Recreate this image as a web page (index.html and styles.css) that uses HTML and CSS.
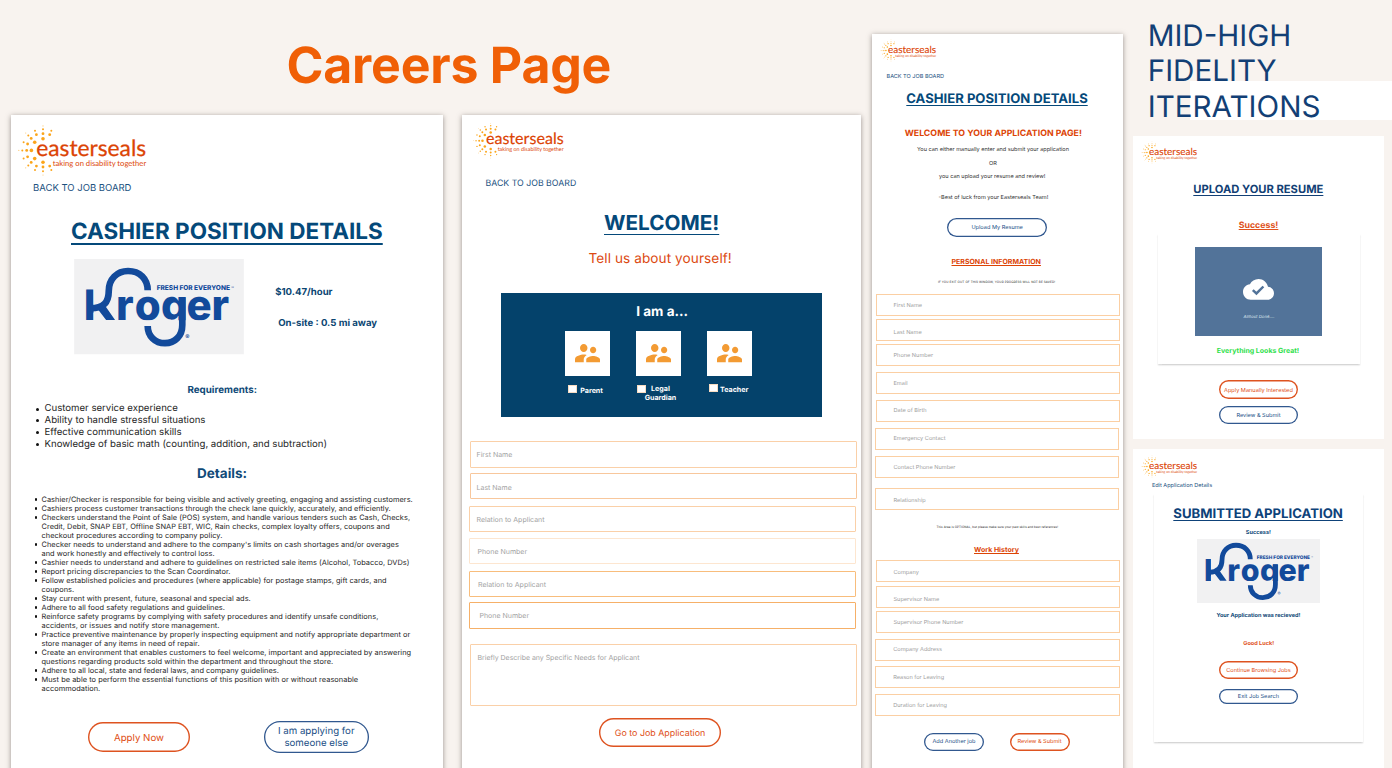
FILE: index.html
```html
<!DOCTYPE html>
<html lang="en">
<head>
<meta charset="utf-8">
<title>Careers Page</title>
<link rel="stylesheet" href="styles.css">
</head>
<body>
<svg class="defs" width="0" height="0" aria-hidden="true">
  <symbol id="easterseals" viewBox="0 0 130 53">
    <g fill="#fba51a">
      <circle cx="25" cy="1.9" r=".6" opacity=".6"/><circle cx="25" cy="5.3" r="1"/><circle cx="25" cy="9.7" r="1.4"/><circle cx="25" cy="14.7" r="1.8"/>
      <circle cx="25" cy="38.2" r="1.8"/><circle cx="25" cy="43" r="1.4"/><circle cx="25" cy="47.3" r="1"/><circle cx="25" cy="51" r=".6" opacity=".6"/>
      <circle cx=".8" cy="26.4" r=".6" opacity=".6"/><circle cx="4.3" cy="26.4" r="1"/><circle cx="8.7" cy="26.4" r="1.4"/><circle cx="13.4" cy="26.4" r="1.8"/>
      <circle cx="16.7" cy="18.3" r="1.8"/><circle cx="13.2" cy="14.4" r="1.4"/><circle cx="10.3" cy="11.4" r="1"/><circle cx="7.7" cy="9" r=".6" opacity=".6"/>
      <circle cx="16.7" cy="34.6" r="1.8"/><circle cx="13.2" cy="38.4" r="1.4"/><circle cx="10.3" cy="41.4" r="1"/><circle cx="7.7" cy="43.8" r=".6" opacity=".6"/>
      <circle cx="9.6" cy="20" r="1.4"/><circle cx="5.6" cy="18.3" r="1"/><circle cx="9.6" cy="32.8" r="1.4"/><circle cx="5.6" cy="34.5" r="1"/>
      <circle cx="18.4" cy="10.7" r="1.4"/><circle cx="17" cy="6.7" r="1"/><circle cx="31.7" cy="10.7" r="1.4"/><circle cx="33.3" cy="6.7" r="1"/>
      <circle cx="18.4" cy="42.1" r="1.4"/><circle cx="17" cy="46.1" r="1"/><circle cx="31.7" cy="42.1" r="1.4"/><circle cx="33.3" cy="46.1" r="1"/>
    </g>
    <g fill="#dc4405" font-family="Lato, sans-serif" text-rendering="geometricPrecision">
      <text x="18.2" y="31.6" font-size="22.5" textLength="110" lengthAdjust="spacingAndGlyphs" stroke="#dc4405" stroke-width=".25">easterseals</text>
      <text x="34.8" y="41.6" font-size="7.7" textLength="93.4" lengthAdjust="spacingAndGlyphs">taking on disability together</text>
    </g>
  </symbol>
  <symbol id="kroger" viewBox="0 0 510 287">
    <clipPath id="baseline"><path d="M0 0H510V184H0Z"/></clipPath>
    <path fill="#f1f1f2" d="M0 0H510V287H0Z"/>
    <g fill="#124a9b" font-family="Inter, sans-serif" font-weight="800" text-rendering="geometricPrecision">
      <g clip-path="url(#baseline)" font-size="126">
        <text x="29 126 182 261 338 413" y="183">kroger</text>
      </g>
      <text x="248" y="94" font-size="20" textLength="220" lengthAdjust="spacingAndGlyphs">FRESH FOR EVERYONE</text>
      <text x="471" y="94" font-size="15" font-weight="500">™</text>
      <text x="334" y="241" font-size="19" font-weight="600">®</text>
    </g>
    <path fill="#f1f1f2" d="M58.5 90H110V184H58.5Z"/>
    <path fill="#124a9b" d="M66 146L90 136L123 183H96L73 153Z"/>
    <g fill="none" stroke="#124a9b" stroke-width="20">
      <path d="M50 148C88 148 104 130 104 96C104 60 129 36 162 36C197 36 221 60 221 94"/>
      <path d="M325 115V198C325 231 303 253 273 253C243 253 221 231 221 201"/>
    </g>
  </symbol>
  <symbol id="people" viewBox="2 5 20 14" preserveAspectRatio="none">
    <path fill="#f39b33" d="M16.5 12c1.38 0 2.49-1.12 2.49-2.5S17.88 7 16.5 7 14 8.12 14 9.5s1.12 2.5 2.5 2.5zM9 11c1.66 0 2.99-1.34 2.99-3S10.66 5 9 5 6 6.34 6 8s1.34 3 3 3zm7.5 3c-1.83 0-5.5.92-5.5 2.75V19h11v-2.25c0-1.83-3.67-2.75-5.5-2.75zM9 13c-2.33 0-7 1.17-7 3.5V19h7v-2.25c0-.85.33-2.34 2.37-3.47C10.5 13.1 9.66 13 9 13z"/>
  </symbol>
</svg>

<div class="board">
  <div class="left">
    <h1 class="page-title">Careers Page</h1>
    <div class="pair">
      <section class="sheet details">
        <svg class="logo-lg"><use href="#easterseals"/></svg>
        <a class="t back">BACK TO JOB BOARD</a>
        <h2 class="heading">CASHIER POSITION DETAILS</h2>
        <div class="hero">
          <svg class="brand"><use href="#kroger"/></svg>
          <div class="facts">
            <p class="t pay">$10.47/hour</p>
            <p class="t distance">On-site : 0.5 mi away</p>
          </div>
        </div>
        <h3 class="t req-title">Requirements:</h3>
        <ul class="req">
          <li>Customer service experience</li>
          <li>Ability to handle stressful situations</li>
          <li>Effective communication skills</li>
          <li>Knowledge of basic math (counting, addition, and subtraction)</li>
        </ul>
        <h3 class="det-title">Details:</h3>
        <ul class="duties">
          <li>Cashier/Checker is responsible for being visible and actively greeting, engaging and assisting customers.</li>
          <li>Cashiers process customer transactions through the check lane quickly, accurately, and efficiently.</li>
          <li>Checkers understand the Point of Sale (POS) system, and handle various tenders such as Cash, Checks,<br>Credit, Debit, SNAP EBT, Offline SNAP EBT, WIC, Rain checks, complex loyalty offers, coupons and<br>checkout procedures according to company policy.</li>
          <li>Checker needs to understand and adhere to the company's limits on cash shortages and/or overages<br>and work honestly and effectively to control loss.</li>
          <li>Cashier needs to understand and adhere to guidelines on restricted sale items (Alcohol, Tobacco, DVDs)</li>
          <li>Report pricing discrepancies to the Scan Coordinator.</li>
          <li>Follow established policies and procedures (where applicable) for postage stamps, gift cards, and<br>coupons.</li>
          <li>Stay current with present, future, seasonal and special ads.</li>
          <li>Adhere to all food safety regulations and guidelines.</li>
          <li>Reinforce safety programs by complying with safety procedures and identify unsafe conditions,<br>accidents, or issues and notify store management.</li>
          <li>Practice preventive maintenance by properly inspecting equipment and notify appropriate department or<br>store manager of any items in need of repair.</li>
          <li>Create an environment that enables customers to feel welcome, important and appreciated by answering<br>questions regarding products sold within the department and throughout the store.</li>
          <li>Adhere to all local, state and federal laws, and company guidelines.</li>
          <li>Must be able to perform the essential functions of this position with or without reasonable<br>accommodation.</li>
        </ul>
        <div class="actions">
          <button class="btn orange apply">Apply Now</button>
          <button class="btn blue proxy">I am applying for<br>someone else</button>
        </div>
      </section>

      <section class="sheet welcome">
        <svg class="logo-md"><use href="#easterseals"/></svg>
        <a class="t back">BACK TO JOB BOARD</a>
        <h2 class="heading">WELCOME!</h2>
        <p class="tell">Tell us about yourself!</p>
        <div class="role">
          <p class="role-title">I am a...</p>
          <div class="roles">
            <div class="choice">
              <div class="tile"><svg><use href="#people"/></svg></div>
              <label class="parent"><i></i><span>Parent</span></label>
            </div>
            <div class="choice">
              <div class="tile"><svg><use href="#people"/></svg></div>
              <label class="guardian"><i></i><span>Legal<br>Guardian</span></label>
            </div>
            <div class="choice">
              <div class="tile"><svg><use href="#people"/></svg></div>
              <label class="teacher"><i></i><span>Teacher</span></label>
            </div>
          </div>
        </div>
        <div class="field a1">First Name</div>
        <div class="field a2">Last Name</div>
        <div class="field a3">Relation to Applicant</div>
        <div class="field a4">Phone Number</div>
        <div class="field a5">Relation to Applicant</div>
        <div class="field a6">Phone Number</div>
        <div class="field area">Briefly Describe any Specific Needs for Applicant</div>
        <button class="btn orange go">Go to Job Application</button>
      </section>
    </div>
  </div>

  <section class="sheet apply-page">
    <svg class="logo-sm"><use href="#easterseals"/></svg>
    <a class="t back">BACK TO JOB BOARD</a>
    <h2 class="heading">CASHIER POSITION DETAILS</h2>
    <h3 class="t greeting">WELCOME TO YOUR APPLICATION PAGE!</h3>
    <p class="t c1">You can either manually enter and submit your application</p>
    <p class="t c2">OR</p>
    <p class="t c3">you can upload your resume and review!</p>
    <p class="t c4">-Best of luck from your Easterseals Team!</p>
    <button class="btn blue upload">Upload My Resume</button>
    <h3 class="t sub personal">PERSONAL INFORMATION</h3>
    <p class="t fine exit">IF YOU EXIT OUT OF THIS WINDOW, YOUR PROGRESS WILL NOT BE SAVED!</p>
    <div class="box b1">First Name</div>
    <div class="box b2 low">Last Name</div>
    <div class="box b3">Phone Number</div>
    <div class="box b4">Email</div>
    <div class="box b5">Date of Birth</div>
    <div class="box b6">Emergency Contact</div>
    <div class="box b7">Contact Phone Number</div>
    <div class="box b8">Relationship</div>
    <p class="t fine optional">This Area is OPTIONAL, but please make sure your past skills and best references!</p>
    <h3 class="t sub history">Work History</h3>
    <div class="box w1">Company</div>
    <div class="box w2 low">Supervisor Name</div>
    <div class="box w3">Supervisor Phone Number</div>
    <div class="box w4">Company Address</div>
    <div class="box w5">Reason for Leaving</div>
    <div class="box w6">Duration for Leaving</div>
    <div class="job-actions">
      <button class="btn blue add">Add Another job</button>
      <button class="btn orange review">Review &amp; Submit</button>
    </div>
  </section>

  <div class="right">
    <h1 class="phase">MID-HIGH<br>FIDELITY<br>ITERATIONS</h1>
    <section class="panel resume">
      <svg class="logo-sm"><use href="#easterseals"/></svg>
      <h2 class="t upload-title">UPLOAD YOUR RESUME</h2>
      <p class="t success">Success!</p>
      <div class="card">
        <div class="drop">
          <svg class="cloud" viewBox="0 4 24 16"><path fill="#fff" d="M19.35 10.04C18.67 6.59 15.64 4 12 4 9.11 4 6.6 5.64 5.35 8.04 2.34 8.36 0 10.91 0 14c0 3.31 2.69 6 6 6h13c2.76 0 5-2.24 5-5 0-2.64-2.05-4.78-4.65-4.96z"/><path fill="none" stroke="#527399" stroke-width="1.9" d="M7.6 12.6L10.4 15.2L15.8 9.8"/></svg>
          <p class="t almost">Almost Done....</p>
        </div>
        <p class="t great">Everything Looks Great!</p>
      </div>
      <button class="btn orange manual">Apply Manually Interested</button>
      <button class="btn blue submit">Review &amp; Submit</button>
    </section>
    <section class="panel submitted">
      <svg class="logo-sm"><use href="#easterseals"/></svg>
      <a class="t edit">Edit Application Details</a>
      <div class="card">
        <h2 class="heading">SUBMITTED APPLICATION</h2>
        <p class="t ok">Success!</p>
        <svg class="brand" viewBox="0 10 510 267" preserveAspectRatio="xMidYMid slice"><use href="#kroger" width="510" height="287"/></svg>
        <p class="t received">Your Application was recieved!</p>
        <p class="t luck">Good Luck!</p>
        <button class="btn orange browse">Continue Browsing Jobs</button>
        <button class="btn blue leave">Exit Job Search</button>
      </div>
    </section>
  </div>
</div>
</body>
</html>
```
FILE: styles.css
```css
* { box-sizing: border-box; margin: 0; padding: 0; }
body { width: 1392px; height: 768px; overflow: hidden; background: #f8f3ef; font-family: Inter, "Liberation Sans", sans-serif; color: #1e1e1e; text-rendering: geometricPrecision; }
.defs { position: absolute; }
svg { display: block; flex: none; }
ul { list-style: none; }
button { font-family: inherit; background: none; border: 0; text-rendering: inherit; }

.board { display: flex; width: 1392px; height: 768px; overflow: hidden; }
.left { width: 861px; margin-right: 11px; flex: none; }
.page-title { height: 115px; padding-left: 286.5px; font-size: 50px; line-height: 60px; padding-top: 35.5px; font-weight: 700; color: #f05f06; white-space: nowrap; letter-spacing: -.2px; }
.pair { display: flex; gap: 19px; padding-left: 11px; }
.sheet { display: flex; flex-direction: column; align-items: flex-start; background: #fff; box-shadow: 0 1px 5px rgba(60, 50, 45, .5); flex: none; }
.t { height: 10px; line-height: 11px; white-space: nowrap; }
.heading { white-space: nowrap; font-weight: 700; color: #04497a; text-decoration: underline; text-decoration-skip-ink: none; }
.back { color: #1c527f; }

.btn { display: flex; align-items: center; justify-content: center; border-radius: 16px; text-align: center; white-space: nowrap; flex: none; }
.orange { color: #e04e14; box-shadow: inset 0 0 0 1.4px #de5320; }
.blue { color: #224f86; box-shadow: inset 0 0 0 1.3px #31588f; }

.logo-lg { width: 130px; height: 53px; margin: 9px 0 0 7px; }
.logo-md { width: 92px; height: 37.5px; margin: 7.1px 0 0 11px; }
.logo-sm { width: 57px; height: 23.2px; margin: 5px 0 0 8px; }

/* Position details */
.details { width: 432px; height: 660px; }
.details .back { margin: 5.7px 0 0 22px; font-size: 9.5px; }
.details .heading { margin: 25.5px 0 0 60px; height: 26px; line-height: 28px; font-size: 22.5px; text-decoration-thickness: 1.7px; text-underline-offset: 4.1px; }
.hero { display: flex; margin: 15.3px 0 0 63px; height: 95px; }
.hero .brand { width: 170px; height: 95.5px; }
.facts { margin-left: 31.2px; padding-top: 27.5px; font-size: 9.6px; font-weight: 700; color: #0b4672; }
.distance { margin: 20.7px 0 0 3px; }
.req-title { margin: 30.2px 0 0 176.5px; font-size: 9.75px; font-weight: 700; color: #0f4a78; }
.req { margin: 8.8px 0 -1px 33.5px; font-size: 9.65px; line-height: 11.7px; letter-spacing: -.01px; }
.req li, .duties li { position: relative; white-space: nowrap; }
.req li::before, .duties li::before { content: ""; position: absolute; border-radius: 50%; background: #111; width: 3px; height: 3px; left: -9px; top: 4.2px; }
.duties li::before { width: 2.6px; height: 2.6px; left: -7px; top: 3.4px; }
.det-title { margin: 15.7px 0 0 186px; height: 18px; line-height: 19.6px; font-size: 13.5px; color: #0f4a78; }
.duties { margin: 11.8px 0 -.3px 30.5px; font-size: 7.4px; line-height: 9px; letter-spacing: .038px; }
.actions { display: flex; margin: 28.5px 0 0 77px; font-size: 9.7px; }
.actions .btn { font-size: 9.7px; line-height: 11.7px; }
.apply { width: 102px; height: 30.5px; margin: 1px 74px 0 0; padding-top: 3.4px; }
.proxy { width: 104.5px; height: 32px; padding-top: 2px; }

/* Welcome form */
.welcome { width: 399px; height: 660px; }
.welcome .back { margin: 18.7px 0 0 23.5px; line-height: 12.6px; font-size: 8.75px; }
.welcome .heading { margin: 21.7px 0 0 142px; height: 24px; line-height: 26.4px; font-size: 20.7px; text-decoration-thickness: 1.4px; text-underline-offset: 3.8px; }
.tell { margin: 17.3px 0 0 126.5px; height: 16px; line-height: 17.8px; font-size: 13.6px; letter-spacing: .08px; color: #dc4a12; white-space: nowrap; }
.role { margin: 25.7px 0 0 39px; width: 321px; height: 124px; padding: 11px 0 0 64.3px; background: #04426b; color: #fff; }
.role-title { margin-left: 71px; font-size: 13.5px; line-height: 16px; font-weight: 700; }
.roles { display: flex; gap: 26.6px; margin-top: 11.3px; font-size: 7.1px; line-height: 8.6px; font-weight: 700; }
.choice { width: 44.4px; }
.tile { height: 44.4px; background: #fff; padding: 13px 0 0 9.7px; }
.tile svg { width: 25px; height: 18.5px; }
.choice label { display: flex; white-space: nowrap; }
.choice i { flex: none; width: 9px; height: 8px; background: #fff; border: 1px solid #f8dcc2; margin-top: 9.6px; }
.parent { padding-left: 3px; gap: 3px; }
.parent span { padding-top: 11.3px; }
.guardian { padding-left: 1.2px; }
.guardian span { padding-top: 9.6px; margin-left: -1.8px; text-align: center; }
.teacher { padding-left: 1.4px; gap: 2.4px; }
.choice .teacher i { margin-top: 8.2px; }
.teacher span { padding-top: 9.9px; }
.field { flex: none; display: flex; align-items: center; width: 387px; height: 26.5px; border: 1px solid #fad0a8; font-size: 7px; color: #a3a3a3; margin-left: 8px; padding-left: 5.5px; padding-top: 1px; border-radius: 1px; }
.a1 { margin-top: 24.3px; padding-top: 0; }
.a2 { margin-top: 5px; border-color: #f8c79c; padding-top: 2px; }
.a3 { margin: 6.7px 0 0 6.5px; padding-left: 7px; }
.a4 { margin: 5.2px 0 0 7px; padding: 1px 0 0 7.5px; border-color: #fde6d0; }
.a5 { margin: 6.5px 0 0 7px; padding-left: 8px; border-color: #f8bd7c; }
.a6 { margin: 5.1px 0 0 7px; padding: 1px 0 0 9.5px; border-color: #f6b068; }
.area { margin-top: 15.5px; height: 61.5px; align-items: flex-start; padding: 8px 0 0 6.5px; letter-spacing: -.03px; }
.go { width: 121.5px; height: 28.8px; margin: 12.2px 0 0 137.3px; font-size: 8.9px; padding-top: 3px; }

/* Application form */
.apply-page { width: 251px; height: 740px; margin: 34px 10px 0 0; }
.apply-page .back { margin: 8.8px 0 0 14.5px; line-height: 12.6px; font-size: 5.55px; }
.apply-page .heading { margin: 10.5px 0 0 34.3px; height: 14px; line-height: 16.2px; font-size: 13.1px; text-decoration-thickness: 1px; text-underline-offset: 2.2px; }
.greeting { margin: 22.3px 0 0 32.7px; line-height: 12.4px; font-size: 8.75px; letter-spacing: .03px; color: #dc4405; }
.c1, .c2, .c3, .c4 { font-size: 5.55px; line-height: 12.4px; color: #333; }
.c1 { margin: 6.4px 0 0 45px; }
.c2 { margin: 3.5px 0 0 117px; }
.c3 { margin: 3.6px 0 0 67px; }
.c4 { margin: 10.4px 0 0 66.5px; }
.upload { width: 100.3px; height: 19.3px; margin: 16.3px 0 0 75px; font-size: 5.6px; padding-top: .6px; }
.sub { font-size: 7px; color: #dc4405; text-decoration: underline; text-decoration-thickness: .8px; text-underline-offset: 1.4px; text-decoration-skip-ink: none; }
.personal { margin: 19.4px 0 0 79.5px; line-height: 10px; }
.fine { font-size: 3px; color: #222; letter-spacing: .06px; }
.exit { margin: 10px 0 0 66px; letter-spacing: .12px; }
.box { flex: none; display: flex; align-items: center; width: 243.5px; height: 22px; margin-left: 4px; padding-left: 16.5px; padding-top: 2.2px; border: 1px solid #fbcfa3; font-size: 5.6px; color: #a0a0a0; }
.low { padding-top: 6.2px; }
.b1 { margin-top: 7.3px; }
.b2, .b3 { margin-top: 3px; }
.b4 { margin-top: 6px; }
.b5 { margin-top: 5.8px; padding-top: 0; }
.b6 { margin: 6px 0 0 3px; padding: 0 0 0 17.5px; }
.b7 { margin: 6.2px 0 0 3px; padding-left: 17.5px; }
.b8 { margin: 10.5px 0 0 3px; padding-left: 17.5px; }
.optional { margin: 11.8px 0 0 64.5px; }
.history { margin: 12px 0 0 102px; }
.w1 { margin-top: 6.2px; }
.w2 { margin-top: 3.2px; }
.w3 { margin-top: 3.1px; }
.w4, .w5, .w6 { width: 244.5px; padding-left: 17.2px; padding-top: 1px; }
.w4 { margin: 6px 0 0 3px; }
.w5 { margin: 5.8px 0 0 3px; }
.w6 { margin: 5.9px 0 0 3px; }
.job-actions { display: flex; gap: 25.5px; margin: 16.2px 0 0 52px; }
.job-actions .btn { width: 60px; height: 18px; font-size: 5.6px; }

/* Right column */
.right { width: 259px; flex: none; }
.phase { height: 120px; padding: 18.6px 0 0 14.7px; margin-bottom: 16px; font-size: 29.6px; line-height: 35.6px; font-weight: 400; color: #123f75; background: linear-gradient(#fff, #fff) 57px 81px / 202px 39px no-repeat; }
.panel { width: 251px; display: flex; flex-direction: column; align-items: flex-start; background: #fff; }
.resume { height: 303px; margin-bottom: 10px; }
.upload-title { margin: 19.8px 0 0 60.3px; font-size: 11.2px; color: #123f75; text-decoration: underline; text-decoration-thickness: .9px; text-underline-offset: 2px; }
.success { margin: 26.5px 0 0 105.7px; line-height: 12px; font-size: 8.8px; font-weight: 700; color: #e0521d; text-decoration: underline; text-decoration-thickness: .9px; text-underline-offset: 1.4px; }
.card { display: flex; flex-direction: column; align-items: flex-start; flex: none; box-shadow: 0 1.5px 1.5px rgba(0, 0, 0, .16); }
.resume .card { width: 202px; height: 131.5px; margin: 2.5px 0 0 24.5px; padding-top: 14.3px; }
.drop { width: 127px; height: 88.7px; margin-left: 37.5px; padding-top: 31.7px; background: #527399; }
.cloud { width: 31px; height: 20.7px; margin-left: 48px; }
.almost { margin: 12.8px 0 0 48.5px; line-height: 12px; font-size: 4.3px; font-style: italic; color: #dfe7ef; }
.great { margin: 9.3px 0 0 59.3px; font-size: 7px; font-weight: 700; color: #2fe04c; }
.manual, .submit { width: 79.5px; font-size: 5.6px; margin-left: 85.7px; }
.manual { height: 18.4px; margin-top: 15.8px; padding-top: 2.4px; }
.submit { height: 18px; margin-top: 7.6px; padding-top: 1.8px; }
.submitted { height: 330px; }
.submitted .logo-sm { margin-top: 6.3px; }
.edit { margin: 2px 0 0 18.9px; line-height: 12.6px; font-size: 5.55px; color: #1c527f; }
.submitted .card { width: 209px; height: 249px; margin: 2.5px 0 0 21px; padding-top: 14px; }
.submitted .heading { margin-left: 19.3px; height: 14px; line-height: 15.8px; font-size: 13.15px; color: #0e4279; text-decoration-thickness: 1px; text-underline-offset: 2.2px; }
.ok { margin: 6.5px 0 0 91.8px; line-height: 12.6px; font-size: 5.6px; font-weight: 700; color: #0f4a78; }
.submitted .brand { width: 123px; height: 64.5px; margin: 1.5px 0 0 43px; }
.received { margin: 6.8px 0 0 62.5px; line-height: 12.6px; font-size: 5.55px; font-weight: 700; color: #0f4a78; }
.luck { margin: 18px 0 0 89.2px; line-height: 12.6px; font-size: 5.6px; font-weight: 700; color: #e0521d; }
.browse, .leave { width: 79.5px; margin-left: 64.7px; font-size: 5.6px; }
.browse { height: 18px; margin-top: 12.7px; padding-top: 2px; }
.leave { height: 15.5px; margin-top: 9.7px; padding-top: 1.4px; }
```
